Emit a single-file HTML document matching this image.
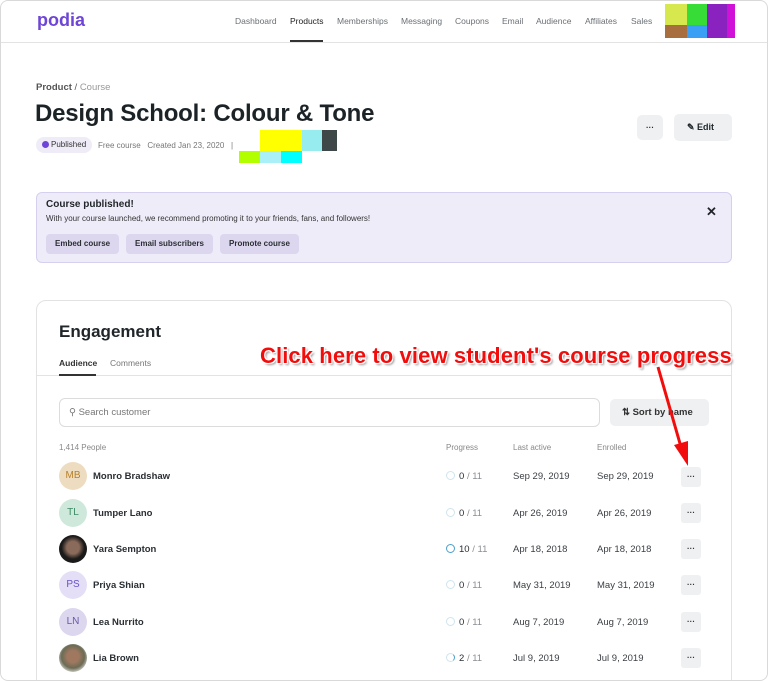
<!DOCTYPE html>
<html style="overflow:hidden"><head><style>
*{margin:0;padding:0;box-sizing:border-box}
html,body{width:768px;height:681px;overflow:hidden}
body{background:#fff;font-family:"Liberation Sans",sans-serif;color:#1f2529;position:relative}
.a{position:absolute;white-space:nowrap}
.frame{position:absolute;left:0;top:0;width:768px;height:681px;border:1.5px solid #d9d9d9;border-radius:8px;z-index:5;pointer-events:none}
.nav{font-size:8.5px;color:#6b7075;top:16px}
.btn{background:#eef0f2;border-radius:5px}
.dot{position:absolute;left:681px;width:20px;height:20px;background:#eef0f2;border-radius:3px;font-size:8px;text-align:center;line-height:20px;font-weight:bold;color:#333}
.av{position:absolute;left:59px;width:28px;height:28px;border-radius:50%;font-size:10px;text-align:center;line-height:28px}
.nm{position:absolute;left:93px;font-size:9.5px;font-weight:bold;color:#2a2f33}
.pr{position:absolute;left:446px;font-size:9.5px;color:#2a2f33}
.pr i{display:inline-block;width:9px;height:9px;border:1.2px solid #cfe4ee;border-radius:50%;vertical-align:-1px;margin-right:4px}
.pr span{color:#8a8f94}
.d1,.d2{position:absolute;font-size:9.5px;color:#3a3f44}
.d1{left:513px}.d2{left:597px}
.bb{position:absolute;top:234px;height:20px;background:#dcd6ee;border-radius:4px;font-size:8px;font-weight:bold;line-height:20px;padding:0 9px;color:#2a2f33}
</style></head><body>
<div class="frame"></div>
<div class="a" style="left:37px;top:10px;font-size:18px;font-weight:bold;color:#6e45d6">podia</div>
<div class="a nav" style="left:235px">Dashboard</div>
<div class="a nav" style="left:290px;color:#222;">Products</div>
<div class="a" style="left:290px;top:40px;width:33px;height:2px;background:#333"></div>
<div class="a nav" style="left:337px">Memberships</div>
<div class="a nav" style="left:401px">Messaging</div>
<div class="a nav" style="left:455px">Coupons</div>
<div class="a nav" style="left:502px">Email</div>
<div class="a nav" style="left:536px">Audience</div>
<div class="a nav" style="left:585px">Affiliates</div>
<div class="a nav" style="left:631px">Sales</div>
<div class="a" style="left:665px;top:4px;width:22px;height:21px;background:#d7e84e"></div>
<div class="a" style="left:687px;top:4px;width:20px;height:21px;background:#37dd36"></div>
<div class="a" style="left:707px;top:4px;width:20px;height:34px;background:#8a22c0"></div>
<div class="a" style="left:727px;top:4px;width:8px;height:34px;background:#d012d8"></div>
<div class="a" style="left:665px;top:25px;width:22px;height:13px;background:#a86e3e"></div>
<div class="a" style="left:687px;top:25px;width:20px;height:13px;background:#3aa0f5"></div>
<div class="a" style="left:0;top:42px;width:768px;height:1px;background:#e3e3e3"></div>

<div class="a" style="left:36px;top:82px;font-size:9.5px;color:#555"><b style="font-weight:bold;color:#555">Product</b> / <span style="color:#999">Course</span></div>
<div class="a" style="left:35px;top:100px;font-size:24px;font-weight:bold;color:#1c2327;letter-spacing:-0.2px">Design School: Colour &amp; Tone</div>
<div class="a" style="left:36px;top:137px;height:16px;padding:0 6px;background:#efecf8;border-radius:8px;font-size:8px;line-height:16px;color:#333"><span style="display:inline-block;width:7px;height:7px;border-radius:50%;background:#6e45d6;vertical-align:-1px;margin-right:2px"></span>Published</div>
<div class="a" style="left:98px;top:141px;font-size:8px;color:#777">Free course&nbsp;&nbsp; Created Jan 23, 2020 &nbsp;&nbsp;|</div>
<div class="a" style="left:260px;top:130px;width:42px;height:21px;background:#ffff00"></div>
<div class="a" style="left:302px;top:130px;width:20px;height:21px;background:#96ecee"></div>
<div class="a" style="left:322px;top:130px;width:15px;height:21px;background:#3f4848"></div>
<div class="a" style="left:239px;top:151px;width:21px;height:12px;background:#b2ff00"></div>
<div class="a" style="left:260px;top:151px;width:21px;height:12px;background:#aaf0f8"></div>
<div class="a" style="left:281px;top:151px;width:21px;height:12px;background:#00ffff"></div>
<div class="a btn" style="left:637px;top:115px;width:26px;height:25px;text-align:center;font-size:8px;font-weight:bold;line-height:25px">···</div>
<div class="a btn" style="left:674px;top:114px;width:58px;height:27px;font-size:9px;font-weight:bold;line-height:27px;padding-left:13px">✎ Edit</div>

<div class="a" style="left:36px;top:192px;width:696px;height:71px;background:#efecf9;border:1px solid #d6cff0;border-radius:6px"></div>
<div class="a" style="left:46px;top:199px;font-size:10px;font-weight:bold">Course published!</div>
<div class="a" style="left:46px;top:214px;font-size:8px;color:#333">With your course launched, we recommend promoting it to your friends, fans, and followers!</div>
<div class="a" style="left:706px;top:204px;font-size:13px;font-weight:bold">✕</div>
<div class="bb" style="left:46px">Embed course</div>
<div class="bb" style="left:126px">Email subscribers</div>
<div class="bb" style="left:220px">Promote course</div>

<div class="a" style="left:36px;top:300px;width:696px;height:400px;border:1px solid #e2e2e2;border-radius:10px"></div>
<div class="a" style="left:59px;top:322px;font-size:17px;font-weight:bold;color:#1f2529">Engagement</div>
<div class="a" style="left:59px;top:358px;font-size:8.5px;font-weight:bold;color:#333">Audience</div>
<div class="a" style="left:110px;top:358px;font-size:8.5px;color:#777">Comments</div>
<div class="a" style="left:37px;top:375px;width:694px;height:1px;background:#e3e3e3"></div>
<div class="a" style="left:59px;top:374px;width:37px;height:2px;background:#333"></div>
<div class="a" style="left:260px;top:343px;font-size:22px;font-weight:bold;color:#f20d0d;letter-spacing:0.1px;text-shadow:1px 1px 0 #fff,-1px -1px 0 #fff,1px -1px 0 #fff,-1px 1px 0 #fff,2px 2px 2px #999">Click here to view student's course progress</div>

<div class="a" style="left:59px;top:398px;width:541px;height:29px;border:1px solid #dcdcdc;border-radius:6px;font-size:9.5px;color:#777;line-height:27px;padding-left:9px">⚲ Search customer</div>
<div class="a btn" style="left:610px;top:399px;width:99px;height:27px;font-size:9.5px;font-weight:bold;line-height:27px;padding-left:12px;color:#333">⇅ Sort by name</div>
<svg class="a" style="left:650px;top:365px" width="45" height="105"><line x1="8" y1="2" x2="31" y2="82" stroke="#f20d0d" stroke-width="3"/><polygon points="24,80 38,76 38,101" fill="#f20d0d"/></svg>

<div class="a" style="left:59px;top:443px;font-size:8px;color:#888">1,414 People</div>
<div class="a" style="left:446px;top:443px;font-size:8px;color:#888">Progress</div>
<div class="a" style="left:513px;top:443px;font-size:8px;color:#888">Last active</div>
<div class="a" style="left:597px;top:443px;font-size:8px;color:#888">Enrolled</div>

<div class="av" style="top:462px;background:#eedcc0;color:#b7812a">MB</div><div class="nm" style="top:471px">Monro Bradshaw</div><div class="pr" style="top:471px"><i></i>0 <span>/ 11</span></div><div class="d1" style="top:471px">Sep 29, 2019</div><div class="d2" style="top:471px">Sep 29, 2019</div><div class="dot" style="top:467px">···</div>
<div class="av" style="top:499px;background:#cfe8dc;color:#3e8a63">TL</div><div class="nm" style="top:508px">Tumper Lano</div><div class="pr" style="top:508px"><i></i>0 <span>/ 11</span></div><div class="d1" style="top:508px">Apr 26, 2019</div><div class="d2" style="top:508px">Apr 26, 2019</div><div class="dot" style="top:503px">···</div>
<div class="av" style="top:535px;background:radial-gradient(circle at 50% 45%,#8a6a5a 0 30%,#1a1a1a 55%)"></div><div class="nm" style="top:544px">Yara Sempton</div><div class="pr" style="top:544px"><i style="border-color:#4a9fd0"></i>10 <span>/ 11</span></div><div class="d1" style="top:544px">Apr 18, 2018</div><div class="d2" style="top:544px">Apr 18, 2018</div><div class="dot" style="top:539px">···</div>
<div class="av" style="top:571px;background:#e4dff7;color:#6b52c7">PS</div><div class="nm" style="top:580px">Priya Shian</div><div class="pr" style="top:580px"><i></i>0 <span>/ 11</span></div><div class="d1" style="top:580px">May 31, 2019</div><div class="d2" style="top:580px">May 31, 2019</div><div class="dot" style="top:575px">···</div>
<div class="av" style="top:608px;background:#dcd6ef;color:#6a5aa6">LN</div><div class="nm" style="top:617px">Lea Nurrito</div><div class="pr" style="top:617px"><i></i>0 <span>/ 11</span></div><div class="d1" style="top:617px">Aug 7, 2019</div><div class="d2" style="top:617px">Aug 7, 2019</div><div class="dot" style="top:612px">···</div>
<div class="av" style="top:644px;background:radial-gradient(circle at 50% 45%,#a07860 0 28%,#6b6b55 55%,#c8c8c0 75%)"></div><div class="nm" style="top:653px">Lia Brown</div><div class="pr" style="top:653px"><i style="border-color:#cfe4ee;border-right-color:#4a9fd0"></i>2 <span>/ 11</span></div><div class="d1" style="top:653px">Jul 9, 2019</div><div class="d2" style="top:653px">Jul 9, 2019</div><div class="dot" style="top:648px">···</div>
</body></html>
